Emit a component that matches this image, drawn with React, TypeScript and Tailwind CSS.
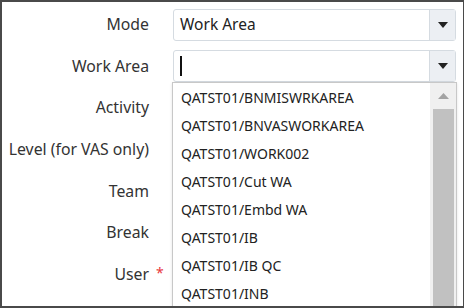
const labels = [
  "Mode",
  "Work Area",
  "Activity",
  "Level (for VAS only)",
  "Team",
  "Break",
  "User",
];

const options = [
  "QATST01/BNMISWRKAREA",
  "QATST01/BNVASWORKAREA",
  "QATST01/WORK002",
  "QATST01/Cut WA",
  "QATST01/Embd WA",
  "QATST01/IB",
  "QATST01/IB QC",
  "QATST01/INB",
];

function Caret() {
  return (
    <svg width="10" height="6" viewBox="0 0 10 6">
      <path d="M0 0H10L5 6Z" fill="#222" />
    </svg>
  );
}

function Select({ value, caret }: { value?: string; caret?: boolean }) {
  return (
    <div className="flex h-[32px] w-[283px] rounded-[3px] border border-[#d5dbe1] bg-white">
      <div className="flex flex-1 items-center px-[6px] text-[15.5px] text-[#222]">
        {caret ? <span className="h-[20px] w-[2px] bg-[#111]" /> : value}
      </div>
      <div className="flex w-[26px] items-center justify-center border-l border-[#d5dbe1] bg-[#eceff3]">
        <Caret />
      </div>
    </div>
  );
}

export default function App() {
  return (
    <div
      className="relative h-[308px] w-[464px] overflow-hidden border-2 border-r-[1.5px] border-[#4a4a4a] bg-white"
      style={{ fontFamily: '"Noto Sans", "Open Sans", sans-serif' }}
    >
      <div className="flex gap-[24px] pt-[7px]">
        <div className="flex w-[147px] flex-col gap-[9.6px]">
          {labels.map((l) => (
            <div
              key={l}
              className="flex h-[32px] items-center justify-end text-[15.8px] text-[#333]"
            >
              <span className="relative">
                {l}
                {l === "User" && (
                  <span className="absolute left-full top-[-1px] ml-[7px] text-[14px] text-[#e8383d]">
                    *
                  </span>
                )}
              </span>
            </div>
          ))}
        </div>
        <div className="flex flex-col gap-[9px]">
          <Select value="Work Area" />
          <Select caret />
        </div>
      </div>

      <div className="absolute left-[170px] top-[80px] flex h-[240px] w-[285px] border border-[#c8c8c8] bg-white shadow-sm">
        <div className="flex-1 overflow-hidden">
          {options.map((o) => (
            <div
              key={o}
              className="flex h-[28px] items-center pl-[8px] text-[14px] text-[#222]"
            >
              {o}
            </div>
          ))}
        </div>
        <div className="flex w-[26px] flex-col items-center bg-[#f0f0f0]">
          <div className="flex h-[26px] items-center justify-center">
            <svg width="11" height="6" viewBox="0 0 11 6">
              <path d="M0 6L5.5 0L11 6Z" fill="#a3a3a3" />
            </svg>
          </div>
          <div className="w-[21px] flex-1 bg-[#c1c1c1]" />
        </div>
      </div>
    </div>
  );
}
